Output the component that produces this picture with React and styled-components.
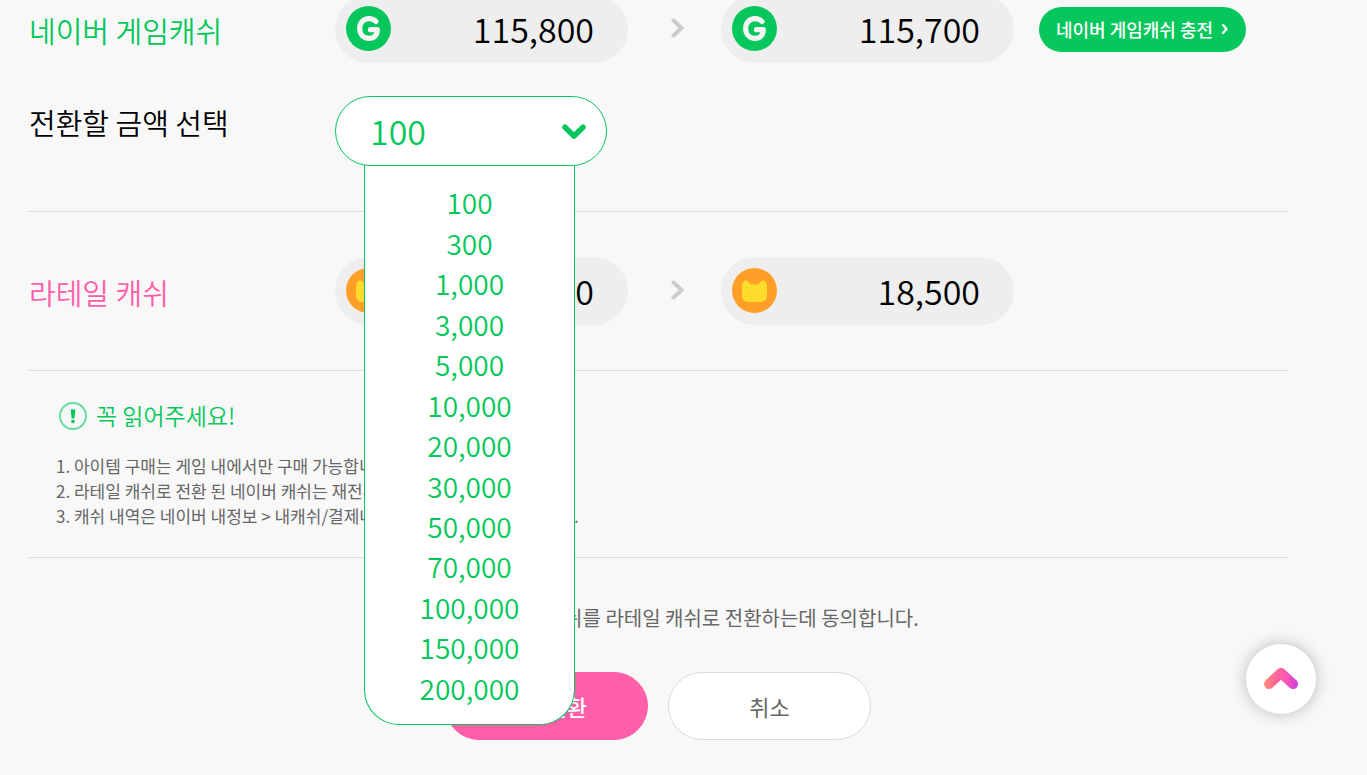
import React, { useState } from 'react';
import styled, { createGlobalStyle } from 'styled-components';

const GREEN = '#06c75b';

const GlobalStyle = createGlobalStyle`
  *, *::before, *::after { box-sizing: border-box; }
  body {
    margin: 0;
    background: #f8f8f8;
    color: #000;
    font-family: "Noto Sans CJK KR", "Noto Sans", sans-serif;
    overflow: hidden;
  }
  button, select, input { font-family: inherit; }
`;

const Page = styled.main`
  margin-top: -5px;
  padding: 0 79px 35px 28px;
`;

const Section = styled.section`
  display: flex;
  flex-direction: column;
  gap: 33px;
  padding: ${(p) => (p.$first ? '0 0 45px' : '45px 0')};
  border-bottom: 1px solid #dcdcdc;
`;

const Row = styled.div`
  display: flex;
  align-items: ${(p) => (p.$top ? 'flex-start' : 'center')};
`;

const labelCss = `
  flex: none;
  width: 307px;
  padding-left: 1px;
  font-size: 29px;
  font-weight: 350;
`;

const Heading = styled.h2`
  ${labelCss}
  margin: 0;
  padding-top: 2px;
  line-height: 54px;
  color: ${(p) => p.$color};
`;

const FieldLabel = styled.label`
  ${labelCss}
  line-height: 52px;
`;

const Pill = styled.div`
  display: flex;
  align-items: center;
  justify-content: space-between;
  flex: none;
  width: 293px;
  height: 68px;
  padding: 0 34px 0 11px;
  border-radius: 34px;
  background: #eee;
`;

const Coin = styled.svg`
  flex: none;
  width: 45px;
  height: 45px;
  margin-bottom: 2px;
`;

const Amount = styled.span`
  font-size: 34px;
  line-height: 48px;
  font-weight: 350;
`;

const Arrow = styled.svg`
  flex: none;
  width: 14px;
  height: 22px;
  margin: 0 36px 2px 43px;
`;

const ChargeLink = styled.a`
  display: flex;
  align-items: center;
  justify-content: center;
  gap: 8px;
  flex: none;
  width: 207px;
  height: 45px;
  margin-left: 25px;
  border-radius: 23px;
  background: ${GREEN};
  color: #fff;
  font-size: 18px;
  font-weight: 500;
  text-decoration: none;
  white-space: nowrap;
`;

const Dropdown = styled.div`
  position: relative;
  flex: none;
  width: 272px;
`;

const AmountSelect = styled.select`
  position: relative;
  z-index: 3;
  display: block;
  width: 100%;
  height: 70px;
  padding: 0 60px 2px 34px;
  appearance: none;
  border: 1px solid ${GREEN};
  border-radius: 35px;
  background: #fff;
  color: ${GREEN};
  font-size: 34px;
  font-weight: 350;
  outline: none;
`;

const Chevron = styled.svg`
  position: absolute;
  z-index: 4;
  top: 28px;
  right: 20px;
  width: 26px;
  height: 16px;
  pointer-events: none;
`;

const Options = styled.ul`
  position: absolute;
  z-index: 2;
  top: 68px;
  left: 29px;
  display: flex;
  flex-direction: column;
  width: 211px;
  height: 561px;
  margin: 0;
  padding: 18px 0 16px;
  list-style: none;
  border: 1px solid ${GREEN};
  border-top: 0;
  border-radius: 0 0 35px 35px;
  background: #fff;
`;

const Option = styled.li`
  flex: 1;
  display: flex;
`;

const OptionButton = styled.button`
  flex: 1;
  padding: 0;
  border: 0;
  background: none;
  color: ${GREEN};
  font-size: 28px;
  line-height: 40px;
  font-weight: 350;
  cursor: pointer;
`;

const Notice = styled.section`
  padding: 28px 28px 29px;
  border-bottom: 1px solid #dcdcdc;
`;

const NoticeTitle = styled.h3`
  display: flex;
  align-items: center;
  gap: 8px;
  margin: 0;
  padding-left: 2px;
  color: ${GREEN};
  font-size: 23px;
  line-height: 32px;
  font-weight: 350;
`;

const NoticeList = styled.ol`
  margin: 22px 0 0;
  padding: 0;
  list-style: none;
  color: #666;
  font-size: 17px;
  line-height: 25px;
`;

const Agreement = styled.label`
  display: flex;
  align-items: center;
  justify-content: center;
  gap: 18px;
  margin: 44px 0 38px;
  padding-left: 6px;
  color: #666;
  font-size: 20px;
  line-height: 32px;
`;

const AgreeBox = styled.input`
  width: 28px;
  height: 28px;
  margin: 0;
`;

const Actions = styled.div`
  display: flex;
  justify-content: center;
  gap: 20px;
`;

const ActionButton = styled.button`
  width: 203px;
  height: 68px;
  padding: 0;
  border: 1px solid ${(p) => (p.$primary ? '#ff5fa9' : '#dcdcdc')};
  border-radius: 34px;
  background: ${(p) => (p.$primary ? '#ff5fa9' : '#fff')};
  color: ${(p) => (p.$primary ? '#fff' : '#666')};
  font-size: 22px;
  font-weight: ${(p) => (p.$primary ? 500 : 400)};
  cursor: pointer;
`;

const TopButton = styled.button`
  position: fixed;
  right: 51px;
  bottom: 61px;
  display: flex;
  align-items: center;
  justify-content: center;
  width: 70px;
  height: 70px;
  padding: 0;
  border: 0;
  border-radius: 50%;
  background: #fff;
  box-shadow: 0 0 16px rgba(0, 0, 0, 0.25);
  cursor: pointer;
`;

const GameCoin = () => (
  <Coin viewBox="0 0 45 45" aria-hidden="true">
    <circle cx="22.5" cy="22.5" r="22.5" fill={GREEN} />
    <path
      d="M30 15.5C28 13.5 25.8 12.7 23 12.7C17.2 12.7 13.7 17 13.7 22.5C13.7 28.200 17.2 32.300 23 32.300C28.300 32.300 31.300 28.900 31.300 23.700H24.500"
      fill="none"
      stroke="#f4f4f4"
      strokeWidth="5.2"
      strokeLinecap="round"
      strokeLinejoin="round"
    />
  </Coin>
);

const LataleCoin = () => (
  <Coin viewBox="0 0 45 45" aria-hidden="true">
    <circle cx="22.5" cy="22.5" r="22.5" fill="#ff9f27" />
    <path
      d="M10 18C10 14.5 12 12.5 14.5 12.5C17 12.5 17 16.5 20 16.5H25C28 16.5 28 12.5 30.5 12.5C33 12.5 35 14.5 35 18V27C35 31.5 32.5 34 28.5 34H16.5C12.5 34 10 31.5 10 27Z"
      fill="#ffdb2c"
    />
  </Coin>
);

const NextArrow = () => (
  <Arrow viewBox="0 0 14 22" aria-hidden="true">
    <path d="M2.5 3.5L10.5 11L2.5 18.5" fill="none" stroke="#ccc" strokeWidth="4" strokeLinecap="round" />
  </Arrow>
);

const AMOUNTS = [
  '100', '300', '1,000', '3,000', '5,000', '10,000', '20,000',
  '30,000', '50,000', '70,000', '100,000', '150,000', '200,000',
];

export default function App() {
  const [amount, setAmount] = useState('100');

  return (
    <>
      <GlobalStyle />
      <Page>
        <Section $first>
          <Row>
            <Heading $color={GREEN}>네이버 게임캐쉬</Heading>
            <Pill><GameCoin /><Amount>115,800</Amount></Pill>
            <NextArrow />
            <Pill><GameCoin /><Amount>115,700</Amount></Pill>
            <ChargeLink href="#charge">
              네이버 게임캐쉬 충전
              <svg width="8" height="12" viewBox="0 0 8 12" aria-hidden="true">
                <path d="M2 2L5.5 6L2 10" fill="none" stroke="#fff" strokeWidth="2.3" strokeLinecap="round" />
              </svg>
            </ChargeLink>
          </Row>
          <Row $top>
            <FieldLabel htmlFor="amount">전환할 금액 선택</FieldLabel>
            <Dropdown>
              <AmountSelect id="amount" value={amount} onChange={(e) => setAmount(e.target.value)}>
                {AMOUNTS.map((a) => <option key={a} value={a}>{a}</option>)}
              </AmountSelect>
              <Chevron viewBox="0 0 26 16" aria-hidden="true">
                <path d="M4 3.2L13 12L22 3.2" fill="none" stroke={GREEN} strokeWidth="5.5" strokeLinecap="round" strokeLinejoin="round" />
              </Chevron>
              <Options>
                {AMOUNTS.map((a) => (
                  <Option key={a}>
                    <OptionButton type="button" onClick={() => setAmount(a)}>{a}</OptionButton>
                  </Option>
                ))}
              </Options>
            </Dropdown>
          </Row>
        </Section>

        <Section>
          <Row>
            <Heading $color="#ff5fa9">라테일 캐쉬</Heading>
            <Pill><LataleCoin /><Amount>18,400</Amount></Pill>
            <NextArrow />
            <Pill><LataleCoin /><Amount>18,500</Amount></Pill>
          </Row>
        </Section>

        <Notice>
          <NoticeTitle>
            <svg width="30" height="32" viewBox="0 0 30 32" aria-hidden="true">
              <circle cx="15" cy="17" r="13" fill="none" stroke="#69dc9b" strokeWidth="2" />
              <path d="M12.6 10.5H17.4L16.4 19.5H13.6Z" fill={GREEN} />
              <circle cx="15" cy="22.5" r="1.8" fill={GREEN} />
            </svg>
            꼭 읽어주세요!
          </NoticeTitle>
          <NoticeList>
            <li>1. 아이템 구매는 게임 내에서만 구매 가능합니다.</li>
            <li>2. 라테일 캐쉬로 전환 된 네이버 캐쉬는 재전환이 불가합니다.</li>
            <li>3. 캐쉬 내역은 네이버 내정보 &gt; 내캐쉬/결제내역에서 확인하실 수 있습니다.</li>
          </NoticeList>
        </Notice>

        <Agreement>
          <AgreeBox type="checkbox" />
          네이버 게임캐쉬를 라테일 캐쉬로 전환하는데 동의합니다.
        </Agreement>
        <Actions>
          <ActionButton type="button" $primary>캐쉬전환</ActionButton>
          <ActionButton type="button">취소</ActionButton>
        </Actions>
      </Page>

      <TopButton type="button" aria-label="맨 위로">
        <svg width="36" height="24" viewBox="0 0 36 24" aria-hidden="true">
          <defs>
            <linearGradient id="up" gradientUnits="userSpaceOnUse" x1="2" y1="18" x2="34" y2="20">
              <stop offset="0" stopColor="#ff8c7c" />
              <stop offset="0.35" stopColor="#ff649f" />
              <stop offset="0.6" stopColor="#fa5cae" />
              <stop offset="1" stopColor="#cf3fdc" />
            </linearGradient>
          </defs>
          <path d="M6 17L18 6L30 17" fill="none" stroke="url(#up)" strokeWidth="10" strokeLinecap="round" strokeLinejoin="round" />
        </svg>
      </TopButton>
    </>
  );
}
